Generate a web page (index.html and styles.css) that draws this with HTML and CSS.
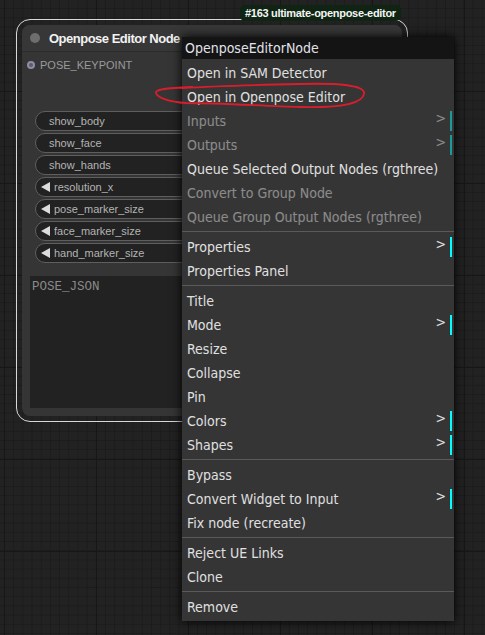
FILE: index.html
```html
<!DOCTYPE html>
<html>
<head>
<meta charset="utf-8">
<link rel="stylesheet" href="styles.css">
</head>
<body>
<div class="canvas">
  <div class="node">
    <div class="node-title"><span class="title-dot"></span><span class="title-text">Openpose Editor Node</span></div>
    <div class="node-body">
      <div class="slot"><span class="slot-dot"></span><span>POSE_KEYPOINT</span></div>
      <div class="widgets">
        <div class="pill"><span class="pill-label">show_body</span></div>
        <div class="pill"><span class="pill-label">show_face</span></div>
        <div class="pill"><span class="pill-label">show_hands</span></div>
        <div class="pill num"><span class="arrow"></span><span class="pill-label">resolution_x</span></div>
        <div class="pill num"><span class="arrow"></span><span class="pill-label">pose_marker_size</span></div>
        <div class="pill num"><span class="arrow"></span><span class="pill-label">face_marker_size</span></div>
        <div class="pill num"><span class="arrow"></span><span class="pill-label">hand_marker_size</span></div>
      </div>
      <div class="textarea">POSE_JSON</div>
    </div>
  </div>
  <div class="badge">#163 ultimate-openpose-editor</div>
  <div class="menu">
    <div class="menu-title">OpenposeEditorNode</div>
    <div class="menu-list">
      <div class="entry">Open in SAM Detector</div>
      <div class="entry">Open in Openpose Editor</div>
      <div class="entry disabled sub">Inputs</div>
      <div class="entry disabled sub">Outputs</div>
      <div class="entry">Queue Selected Output Nodes (rgthree)</div>
      <div class="entry disabled">Convert to Group Node</div>
      <div class="entry disabled">Queue Group Output Nodes (rgthree)</div>
      <div class="sep"></div>
      <div class="entry sub">Properties</div>
      <div class="entry">Properties Panel</div>
      <div class="sep"></div>
      <div class="entry">Title</div>
      <div class="entry sub">Mode</div>
      <div class="entry">Resize</div>
      <div class="entry">Collapse</div>
      <div class="entry">Pin</div>
      <div class="entry sub">Colors</div>
      <div class="entry sub">Shapes</div>
      <div class="sep"></div>
      <div class="entry">Bypass</div>
      <div class="entry sub">Convert Widget to Input</div>
      <div class="entry">Fix node (recreate)</div>
      <div class="sep"></div>
      <div class="entry">Reject UE Links</div>
      <div class="entry">Clone</div>
      <div class="sep"></div>
      <div class="entry">Remove</div>
    </div>
  </div>
  <svg class="scribble" width="485" height="635" viewBox="0 0 485 635">
    <path d="M182 88 C215 86 250 85 300 84 C338 83 366 85 364 94 C362 104 340 108 300 107 C262 106 222 103 186 103 C168 102 157 97 156 93 C155 90 163 88 192 87" fill="none" stroke="#d81e2c" stroke-width="1.8" stroke-linecap="round"/>
  </svg>
</div>
</body>
</html>
```
FILE: styles.css
```css
* { box-sizing: border-box; }
html, body { margin: 0; padding: 0; }
body { background: #202020; }

.canvas {
  position: relative;
  width: 485px;
  height: 635px;
  overflow: hidden;
  background-color: #222222;
  background-image:
    linear-gradient(to right, #171717 1px, transparent 1px),
    linear-gradient(to bottom, #171717 1px, transparent 1px),
    linear-gradient(to right, #1c1c1c 1px, transparent 1px),
    linear-gradient(to bottom, #1c1c1c 1px, transparent 1px);
  background-size: 92px 92px, 92px 92px, 9.2px 9.2px, 9.2px 9.2px;
  background-position: 4px 91px, 4px 91px, 4px 8.2px, 4px 8.2px;
  font-family: "Liberation Sans", Arial, sans-serif;
}

/* ---------- node ---------- */
.node {
  position: absolute;
  left: 22px;
  top: 25px;
  width: 380px;
  height: 391px;
  background: #353535;
  border-radius: 8px;
  outline: 1px solid #d8d8d8;
  outline-offset: 5px;
  display: flex;
  flex-direction: column;
}
.node-title {
  height: 27px;
  display: flex;
  align-items: center;
  padding-left: 8px;
  gap: 9px;
  border-bottom: 1px solid #2b2b2b;
  border-radius: 8px 8px 0 0;
  background: #373737;
}
.title-dot {
  width: 10px;
  height: 10px;
  border-radius: 50%;
  background: #6e6e6e;
}
.title-text {
  color: #f2f2f2;
  font-weight: bold;
  font-size: 13px;
  letter-spacing: -0.5px;
}
.node-body {
  flex: 1;
  display: flex;
  flex-direction: column;
  padding: 5px 8px 8px 8px;
}
.slot {
  height: 16px;
  margin-left: -3px;
  display: flex;
  align-items: center;
  gap: 5px;
  color: #9a9a9a;
  font-size: 11px;
}
.slot-dot {
  width: 8px;
  height: 8px;
  border-radius: 50%;
  background: #5b5b6e;
  border: 2px solid #8d8da5;
}
.widgets {
  margin-top: 38px;
  margin-left: 5px;
  margin-right: 7px;
  display: flex;
  flex-direction: column;
  gap: 2px;
}
.pill {
  height: 20px;
  border: 1px solid #5e5e5e;
  border-radius: 10px;
  background: #222222;
  display: flex;
  align-items: center;
  padding-left: 13px;
  color: #b4b4b4;
  font-size: 11px;
}
.pill.num { padding-left: 5px; gap: 4px; }
.arrow {
  width: 0;
  height: 0;
  border-top: 5px solid transparent;
  border-bottom: 5px solid transparent;
  border-right: 9px solid #dcdcdc;
}
.textarea {
  margin-top: 13px;
  height: 132px;
  background: #222222;
  color: #8a8a8a;
  font-family: "Liberation Mono", "DejaVu Sans Mono", monospace;
  font-size: 12.5px;
  padding: 4px 2px;
}

/* ---------- badge ---------- */
.badge {
  position: absolute;
  left: 240px;
  top: 5px;
  height: 16px;
  padding: 0 5px;
  border-radius: 5px;
  background: #0f2412;
  color: #f4f4f4;
  font-weight: bold;
  font-size: 11px;
  line-height: 16px;
  letter-spacing: -0.3px;
}

/* ---------- menu ---------- */
.menu {
  position: absolute;
  left: 182px;
  top: 37px;
  width: 272px;
  background: #353535;
  box-shadow: 0 0 10px #000;
  font-family: "DejaVu Sans Condensed", "DejaVu Sans", sans-serif;
  font-size: 14px;
}
.menu-title {
  height: 22px;
  line-height: 22px;
  background: #141414;
  color: #e2e2ea;
  padding-left: 3px;
}
.menu-list {
  padding: 2px 0;
  display: flex;
  flex-direction: column;
}
.entry {
  position: relative;
  height: 20px;
  line-height: 20px;
  margin: 2px;
  padding-left: 3px;
  color: #e0e0e0;
  white-space: nowrap;
}
.entry.disabled { opacity: 0.5; }
.entry.sub { border-right: 2px solid #00ffff; }
.entry.sub::after {
  content: ">";
  position: absolute;
  right: 4px;
  top: -3px;
  color: #e0e0e0;
}
.sep {
  height: 1px;
  background: #5a5a5a;
  margin: 2px 0 3px 0;
}

.scribble {
  position: absolute;
  left: 0;
  top: 0;
  pointer-events: none;
}
```
